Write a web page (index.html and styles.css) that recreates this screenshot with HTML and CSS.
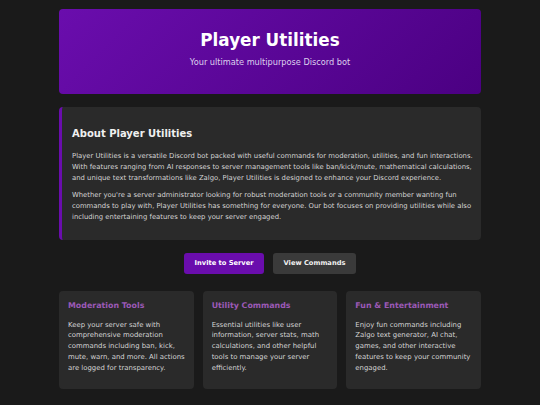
FILE: index.html
```html
<!DOCTYPE html>
<html lang="en">
<head>
    <meta charset="UTF-8">
    <meta name="viewport" content="width=device-width, initial-scale=1.0">
    <title>Player Utilities</title>
    <link rel="stylesheet" href="styles.css">
</head>
<body>
    <div class="container">
        <header class="hero">
            <h1>Player Utilities</h1>
            <p>Your ultimate multipurpose Discord bot</p>
        </header>

        <section class="about">
            <h2>About Player Utilities</h2>
            <p>Player Utilities is a versatile Discord bot packed with useful commands for moderation, utilities, and fun interactions. With features ranging from AI responses to server management tools like ban/kick/mute, mathematical calculations, and unique text transformations like Zalgo, Player Utilities is designed to enhance your Discord experience.</p>
            <p>Whether you're a server administrator looking for robust moderation tools or a community member wanting fun commands to play with, Player Utilities has something for everyone. Our bot focuses on providing utilities while also including entertaining features to keep your server engaged.</p>
        </section>

        <div class="actions">
            <a class="btn btn-primary" href="#">Invite to Server</a>
            <a class="btn btn-secondary" href="#">View Commands</a>
        </div>

        <div class="features">
            <div class="feature-card">
                <h3>Moderation Tools</h3>
                <p>Keep your server safe with comprehensive moderation commands including ban, kick, mute, warn, and more. All actions are logged for transparency.</p>
            </div>
            <div class="feature-card">
                <h3>Utility Commands</h3>
                <p>Essential utilities like user information, server stats, math calculations, and other helpful tools to manage your server efficiently.</p>
            </div>
            <div class="feature-card">
                <h3>Fun &amp; Entertainment</h3>
                <p>Enjoy fun commands including Zalgo text generator, AI chat, games, and other interactive features to keep your community engaged.</p>
            </div>
        </div>
    </div>
</body>
</html>
```

FILE: styles.css
```css
body {
    margin: 0;
    background-color: #1a1a1a;
    color: #e0e0e0;
    font-family: "DejaVu Sans", Verdana, sans-serif;
}
.container {
    width: 422px;
    margin: 0 auto;
    padding-top: 9px;
}
.hero {
    background: linear-gradient(135deg, #6a0dad, #4b0082);
    border-radius: 4px;
    padding: 20px 20px 26px;
    text-align: center;
    color: white;
}
.hero h1 {
    margin: 0;
    font-size: 16.8px;
    line-height: 22px;
}
.hero p {
    margin: 5px 0 0;
    font-size: 8.2px;
    line-height: 12px;
    color: #ddd0ee;
}
.about {
    margin-top: 13px;
    background-color: #2a2a2a;
    border-left: 3px solid #6a0dad;
    border-radius: 4px;
    padding: 20px 7px 16.5px 10px;
}
.about h2 {
    margin: 0 0 11px;
    font-size: 10px;
    line-height: 13px;
    color: #f0f0f0;
}
.about p {
    margin: 0 0 6px;
    font-size: 6.85px;
    line-height: 11px;
    color: #d4d4d4;
}
.about p:last-child { margin-bottom: 0; }
.actions {
    display: flex;
    justify-content: center;
    gap: 9px;
    margin-top: 13px;
}
.btn {
    display: block;
    height: 21px;
    line-height: 21px;
    padding: 0 10.5px;
    border-radius: 3px;
    font-size: 6.7px;
    font-weight: bold;
    color: white;
    text-decoration: none;
}
.btn-primary { background-color: #6a0dad; }
.btn-secondary { background-color: #3a3a3a; color: #f0f0f0; }
.features {
    display: grid;
    grid-template-columns: repeat(3, 1fr);
    gap: 9px;
    margin-top: 17px;
}
.feature-card {
    background-color: #2a2a2a;
    border-radius: 4px;
    padding: 9px 8px 15px 9px;
    height: 74px;
}
.feature-card h3 {
    margin: 0 0 9px;
    font-size: 7.9px;
    line-height: 11px;
    color: #9b59b6;
}
.feature-card p {
    margin: 0;
    font-size: 6.9px;
    line-height: 10.75px;
    color: #d4d4d4;
}
```
